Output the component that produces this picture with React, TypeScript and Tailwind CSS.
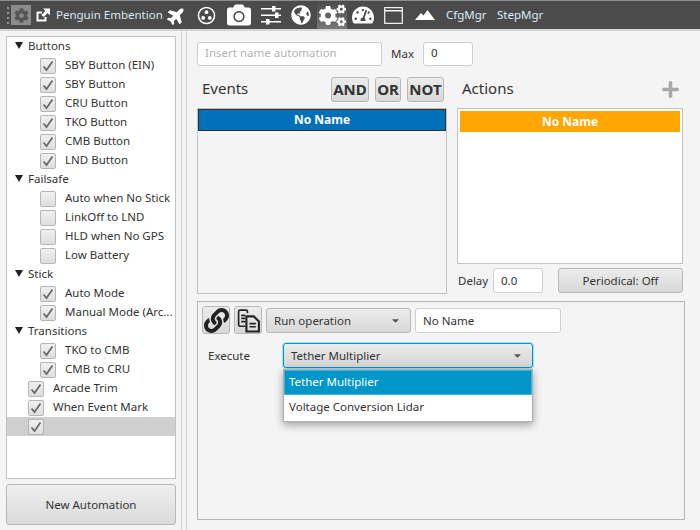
import React from 'react';
import {
  FaPlane,
  FaCamera,
  FaGlobeAmericas,
  FaCog,
  FaCogs,
  FaTachometerAlt,
  FaLink,
  FaPlus,
  FaCaretDown,
} from 'react-icons/fa';

type TreeRow = { label: string; depth: 0 | 1 | 2; kind: 'group' | 'check'; checked?: boolean; selected?: boolean };

const rows: TreeRow[] = [
  { label: 'Buttons', depth: 0, kind: 'group' },
  { label: 'SBY Button (EIN)', depth: 2, kind: 'check', checked: true },
  { label: 'SBY Button', depth: 2, kind: 'check', checked: true },
  { label: 'CRU Button', depth: 2, kind: 'check', checked: true },
  { label: 'TKO Button', depth: 2, kind: 'check', checked: true },
  { label: 'CMB Button', depth: 2, kind: 'check', checked: true },
  { label: 'LND Button', depth: 2, kind: 'check', checked: true },
  { label: 'Failsafe', depth: 0, kind: 'group' },
  { label: 'Auto when No Stick', depth: 2, kind: 'check' },
  { label: 'LinkOff to LND', depth: 2, kind: 'check' },
  { label: 'HLD when No GPS', depth: 2, kind: 'check' },
  { label: 'Low Battery', depth: 2, kind: 'check' },
  { label: 'Stick', depth: 0, kind: 'group' },
  { label: 'Auto Mode', depth: 2, kind: 'check', checked: true },
  { label: 'Manual Mode (Arc...', depth: 2, kind: 'check', checked: true },
  { label: 'Transitions', depth: 0, kind: 'group' },
  { label: 'TKO to CMB', depth: 2, kind: 'check', checked: true },
  { label: 'CMB to CRU', depth: 2, kind: 'check', checked: true },
  { label: 'Arcade Trim', depth: 1, kind: 'check', checked: true },
  { label: 'When Event Mark', depth: 1, kind: 'check', checked: true },
  { label: '', depth: 1, kind: 'check', checked: true, selected: true },
];

function Check({ checked }: { checked?: boolean }) {
  return (
    <span className="flex h-[16px] w-[16px] shrink-0 items-center justify-center rounded-[2px] border border-[#b5b5b5] bg-gradient-to-b from-[#f0f0f0] to-[#dedede]">
      {checked && (
        <svg viewBox="0 0 12 12" className="h-[12px] w-[12px]" fill="none" stroke="#666" strokeWidth="1.700">
          <path d="M1.500 6.500L4.500 10L10.500 1.500" />
        </svg>
      )}
    </span>
  );
}

function Tree() {
  return (
    <div className="flex h-[443px] w-[170px] flex-col overflow-hidden border border-[#c2c2c2] bg-white">
      {rows.map((r, i) => (
        <div key={i} className={`flex h-[19px] shrink-0 items-center ${r.selected ? 'bg-[#cfcfcf]' : ''}`}>
          {r.kind === 'group' ? (
            <>
              <span className="ml-[8px] h-0 w-0 -translate-y-px border-x-[4px] border-t-[7px] border-x-transparent border-t-[#222]" />
              <span className="ml-[5px] pb-[2px]">{r.label}</span>
            </>
          ) : (
            <>
              <span className={r.depth === 2 ? 'ml-[33px]' : 'ml-[21px]'}>
                <Check checked={r.checked} />
              </span>
              <span className="ml-[9px] whitespace-nowrap pb-[2px]">{r.label}</span>
            </>
          )}
        </div>
      ))}
    </div>
  );
}

function ToolBar() {
  const icon = 'text-white';
  return (
    <div className="flex h-[29px] items-center border-t border-[#8e8e8e] bg-[#4b4b4b] text-[#dce6ee]">
      <div className="ml-[7px] flex flex-col gap-[3px]">
        <span className="h-[2px] w-[2px] bg-[#999]" />
        <span className="h-[2px] w-[2px] bg-[#999]" />
        <span className="h-[2px] w-[2px] bg-[#999]" />
        <span className="h-[2px] w-[2px] bg-[#999]" />
      </div>
      <div className="ml-[2px] flex h-[20px] w-[20px] items-center justify-center bg-[#8c8c8c]">
        <FaCog className="h-[15px] w-[15px] text-[#555]" />
      </div>
      <svg viewBox="0 0 16 16" className="ml-[4px] h-[16px] w-[16px]">
        <path d="M2 4.500h5v2H3.500v6h6V10h2v4.500H1.500V5z" fill="#fff" />
        <path d="M8 1.500h7v7l-2.400-2.400-4 4-2.200-2.200 4-4z" fill="#fff" />
      </svg>
      <span className="ml-[5px] w-[105px] whitespace-nowrap">Penguin Embention</span>
      <FaPlane className={`ml-[6px] h-[19px] w-[19px] -rotate-45 ${icon}`} />
      <svg viewBox="0 0 20 20" className="ml-[11px] h-[19px] w-[19px]">
        <circle cx="10" cy="10" r="8.500" fill="none" stroke="#fff" strokeWidth="1.600" />
        <circle cx="10" cy="6.500" r="2" fill="#fff" />
        <circle cx="6.500" cy="12.500" r="2" fill="#fff" />
        <circle cx="13.500" cy="12.500" r="2" fill="#fff" />
      </svg>
      <FaCamera className={`ml-[11px] h-[24px] w-[24px] ${icon}`} />
      <svg viewBox="0 0 20 20" className="ml-[10px] h-[20px] w-[20px]" fill="#fff">
        <rect x="0" y="3" width="20" height="1.500" />
        <rect x="0" y="9.500" width="20" height="1.500" />
        <rect x="0" y="16" width="20" height="1.500" />
        <rect x="11" y="1" width="3.500" height="5.500" />
        <rect x="14" y="7.500" width="3.500" height="5.500" />
        <rect x="5" y="14" width="3.500" height="5.500" />
      </svg>
      <FaGlobeAmericas className={`ml-[10px] h-[20px] w-[20px] ${icon}`} />
      <div className="ml-[6px] flex h-[28px] w-[30px] items-center justify-center bg-gradient-to-b from-[#4b4b4b] to-[#777]">
        <FaCogs className={`h-[27px] w-[27px] ${icon}`} />
      </div>
      <FaTachometerAlt className={`ml-[5px] h-[22px] w-[22px] ${icon}`} />
      <svg viewBox="0 0 20 18" className="ml-[10px] h-[17px] w-[19px]">
        <rect x="0.700" y="0.700" width="18.600" height="16.600" fill="none" stroke="#fff" strokeWidth="1.200" />
        <path d="M1 4h18" stroke="#fff" strokeWidth="1.500" />
      </svg>
      <svg viewBox="0 0 20 10" className="ml-[12px] h-[10px] w-[20px]" fill="#fff">
        <path d="M0 10L6 3L8.500 5.500L12.500 0L20 10z" />
      </svg>
      <span className="ml-[11px] w-[40px] text-[#dcecf8]">CfgMgr</span>
      <span className="ml-[11px] text-[#dcecf8]">StepMgr</span>
    </div>
  );
}

function TextBox({ className, children, muted }: { className: string; children: React.ReactNode; muted?: boolean }) {
  return (
    <div className={`flex items-center rounded-[3px] border border-[#cfcfcf] bg-white px-[7px] ${muted ? 'text-[#b4b4b4]' : ''} ${className}`}>
      {children}
    </div>
  );
}

function GateButton({ label, width }: { label: string; width: string }) {
  return (
    <div className={`flex h-[25px] items-center justify-center rounded-[3px] border border-[#b8b8b8] bg-gradient-to-b from-[#ececec] to-[#d8d8d8] text-[15px] font-bold text-[#333] ${width}`}>
      {label}
    </div>
  );
}

function IconButton({ children }: { children: React.ReactNode }) {
  return (
    <div className="flex h-[28px] w-[28px] items-center justify-center rounded-[3px] border border-[#b8b8b8] bg-gradient-to-b from-[#ececec] to-[#d8d8d8]">
      {children}
    </div>
  );
}

export default function App() {
  return (
    <div
      className="flex h-[530px] w-[700px] flex-col overflow-hidden bg-[#f4f4f4] text-[11.5px] text-[#333]"
      style={{ fontFamily: '"Noto Sans", "Open Sans", sans-serif' }}
    >
      <ToolBar />
      <div className="h-[2px] bg-[#d4d4d4]" />
      <div className="flex min-h-0 flex-1">
        {/* left column */}
        <div className="flex w-[181px] flex-col gap-[5px] pl-[6px] pt-[5px]">
          <Tree />
          <div className="flex h-[41px] w-[170px] items-center justify-center rounded-[3px] border border-[#b8b8b8] bg-gradient-to-b from-[#efefef] to-[#dadada]">
            New Automation
          </div>
        </div>
        <div className="w-[6px] border-x border-[#d0d0d0] bg-[#f4f4f4]" />

        {/* right column */}
        <div className="flex min-w-0 flex-1 flex-col pl-[10px] pt-[11px]">
          <div className="flex items-center">
            <TextBox className="h-[24px] w-[185px] pb-[2px]" muted>Insert name automation</TextBox>
            <span className="ml-[9px] w-[32px]">Max</span>
            <TextBox className="h-[24px] w-[50px] pb-[2px]">0</TextBox>
          </div>

          <div className="mt-[10px] flex">
            <div className="flex w-[250px] flex-col">
              <div className="flex h-[26px] items-center">
                <span className="ml-[5px] -translate-y-px text-[15px]">Events</span>
                <div className="ml-auto mr-[3px] flex gap-[6px]">
                  <GateButton label="AND" width="w-[38px]" />
                  <GateButton label="OR" width="w-[26px]" />
                  <GateButton label="NOT" width="w-[37px]" />
                </div>
              </div>
              <div className="mt-[6px] h-[186px] border border-[#c2c2c2] bg-[#f4f4f4]">
                <div className="flex h-[22px] items-center justify-center border border-[#333] bg-[#0071b8] text-[12px] font-bold text-white">
                  No Name
                </div>
              </div>
            </div>

            <div className="ml-[10px] flex w-[226px] flex-col">
              <div className="flex h-[26px] items-center">
                <span className="ml-[5px] -translate-y-px text-[15px]">Actions</span>
                <FaPlus className="ml-auto mr-[3px] h-[19px] w-[19px] text-[#a8a8a8]" />
              </div>
              <div className="mt-[6px] h-[156px] border border-[#c2c2c2] bg-white p-[2px]">
                <div className="flex h-[21px] items-center justify-center bg-[#ffa600] text-[12px] font-bold text-white">
                  No Name
                </div>
              </div>
              <div className="mt-[4px] flex items-center">
                <span className="ml-px w-[35px]">Delay</span>
                <TextBox className="h-[25px] w-[50px]">0.0</TextBox>
                <div className="ml-auto flex h-[25px] w-[125px] items-center justify-center rounded-[3px] border border-[#b8b8b8] bg-gradient-to-b from-[#ececec] to-[#d8d8d8]">
                  Periodical: Off
                </div>
              </div>
            </div>
          </div>

          {/* operation panel */}
          <div className="relative mt-[7px] h-[219px] w-[488px] border border-[#b5b5b5] px-[4px] pt-[4px]">
            <div className="flex items-center gap-[4px]">
              <IconButton>
                <FaLink className="h-[25px] w-[25px] text-[#222]" />
              </IconButton>
              <IconButton>
                <svg viewBox="0 0 24 24" className="h-[25px] w-[25px]" fill="none" stroke="#222" strokeWidth="1.600">
                  <path d="M11 5V3.500C11 2.500 10.500 2 9.500 2H4C3 2 2.500 2.500 2.500 3.500V16C2.500 17 3 17.500 4 17.500H9" />
                  <path d="M5 7h4M5 10h4M5 13h4" />
                  <path d="M10 8h7l5 5v9.500H10z" strokeWidth="2" />
                  <path d="M13 15h6M13 18h6" />
                </svg>
              </IconButton>
              <div className="flex h-[25px] w-[145px] items-center rounded-[3px] border border-[#b8b8b8] bg-gradient-to-b from-[#ececec] to-[#d8d8d8] pl-[7px] pr-[9px]">
                <span className="pt-px">Run operation</span>
                <FaCaretDown className="ml-auto h-[11px] w-[11px] text-[#555]" />
              </div>
              <TextBox className="h-[25px] w-[146px] pt-px">No Name</TextBox>
            </div>

            <div className="mt-[9px] flex items-center">
              <span className="ml-[6px] w-[75px]">Execute</span>
              <div className="flex h-[25px] w-[250px] items-center rounded-[3px] border border-[#0096c9] bg-gradient-to-b from-[#ececec] to-[#d4d4d4] pl-[7px] pr-[9px] shadow-[0_0_0_1px_#a5dcf0]">
                Tether Multiplier
                <FaCaretDown className="ml-auto h-[11px] w-[11px] text-[#555]" />
              </div>
            </div>

            {/* open dropdown */}
            <div className="absolute left-[85px] top-[67px] z-10 w-[250px] border border-[#b0b0b0] bg-white shadow-[0_3px_8px_rgba(0,0,0,0.35)]">
              <div className="flex h-[25px] items-center border border-[#3fb2d8] bg-[#0096c9] px-[4px] pb-[2px] text-white">Tether Multiplier</div>
              <div className="flex h-[26px] items-center px-[5px] pb-[2px]">Voltage Conversion Lidar</div>
            </div>
          </div>
        </div>
      </div>
    </div>
  );
}
